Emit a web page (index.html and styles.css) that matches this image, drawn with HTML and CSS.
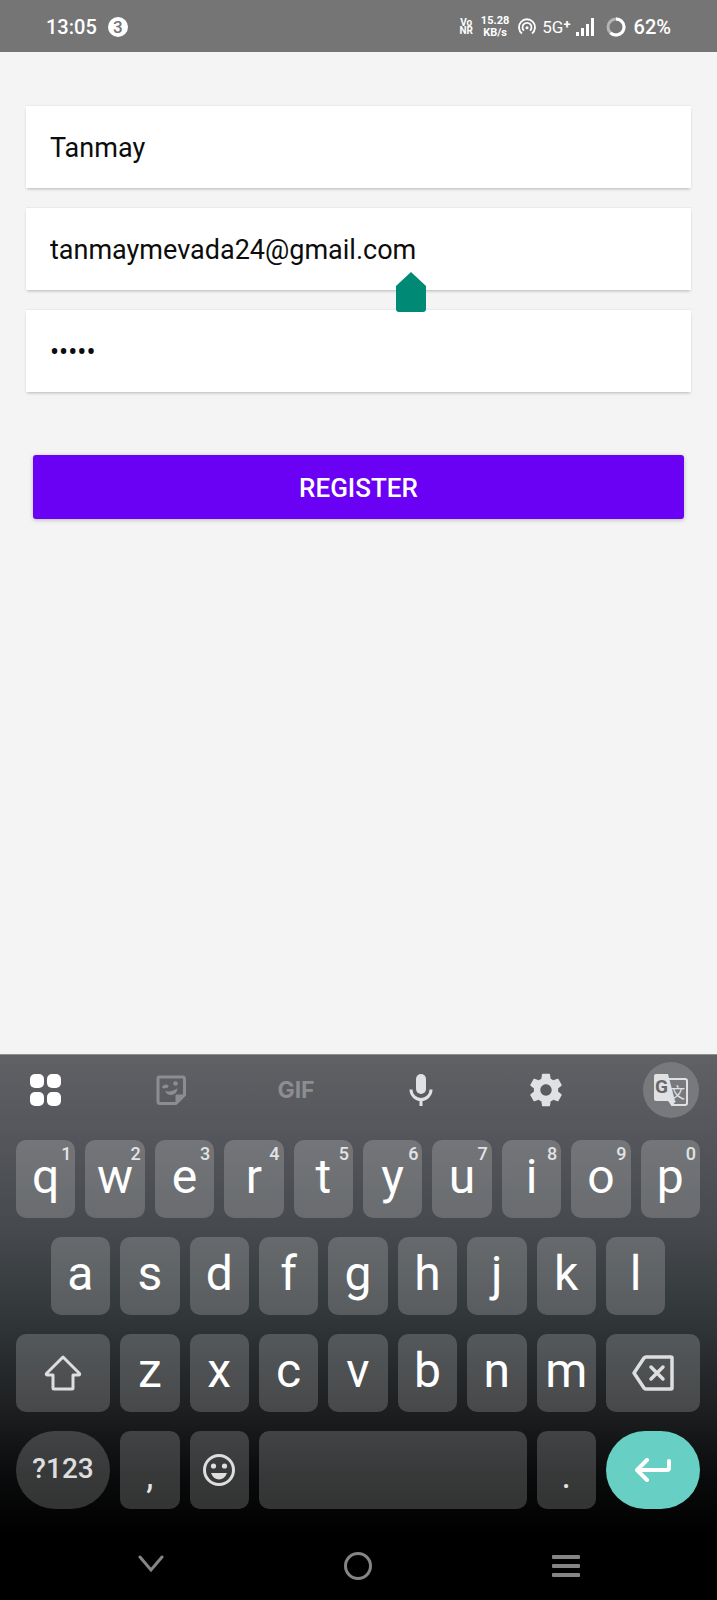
FILE: index.html
```html
<!DOCTYPE html>
<html lang="en">
<head>
<meta charset="utf-8">
<meta name="viewport" content="width=device-width, initial-scale=1">
<title>Register</title>
<link rel="stylesheet" href="styles.css">
</head>
<body>
<div class="screen">
  <header class="status">
    <span class="clock">13:05</span>
    <span class="count">3</span>
    <div class="status-right">
      <span class="stack vonr"><span>Vo</span><span>NR</span></span>
      <span class="stack speed"><span>15.28</span><span>KB/s</span></span>
      <svg class="hotspot" width="18" height="18" viewBox="0 0 18 18" fill="none" stroke="#fff" stroke-width="1.800"><path d="M4 15.500A8 8 0 1 1 14 15.500"/><path d="M6 12.700A4.500 4.500 0 1 1 12 12.700"/><circle cx="9" cy="9.800" r="1.500" fill="#fff" stroke="none"/></svg>
      <span class="network">5G<sup>+</sup></span>
      <svg class="signal" width="20" height="18" viewBox="0 0 20 18" fill="#fff"><path d="M1 14h3v4H1zM6 10h3v8H6zM11 6h3v12h-3zM16 0h3v18h-3z"/></svg>
      <svg class="ring" width="20" height="20" viewBox="0 0 20 20" fill="none" stroke-width="3"><circle cx="10" cy="10" r="8" stroke="#b4b4b4"/><path d="M10 2A8 8 0 1 1 4.500 15.800" stroke="#fff"/></svg>
      <span class="battery">62%</span>
    </div>
  </header>

  <form class="form">
    <div class="field"><input type="text" aria-label="Name" value="Tanmay"></div>
    <div class="field">
      <input type="email" aria-label="Email" value="tanmaymevada24@gmail.com">
      <svg class="handle" width="30" height="40" viewBox="0 0 30 40" fill="#008975"><path d="M15 0 30 14V37Q30 40 27 40H3Q0 40 0 37V14Z"/></svg>
    </div>
    <div class="field"><input type="password" aria-label="Password" value="12345"></div>
    <button type="button" class="register">REGISTER</button>
  </form>

  <section class="keyboard" aria-label="Keyboard">
    <div class="tools">
      <button class="tool" aria-label="Menu"><svg width="32" height="32" viewBox="0 0 32 32" fill="#fff"><rect x="0" y="0" width="14" height="14" rx="5"/><rect x="17" y="0" width="14" height="14" rx="5"/><rect x="0" y="18" width="14" height="14" rx="5"/><rect x="17" y="18" width="14" height="14" rx="5"/></svg></button>
      <button class="tool" aria-label="Stickers"><svg width="30" height="30" viewBox="0 0 30 30" fill="none" stroke="#8b8d91" stroke-width="3" stroke-linejoin="round"><path d="M3 2H27Q28.500 2 28.500 4V20L20 28.500H4Q2 28.500 2 26.500V3.500Q2 2 3 2Z"/><path d="M28 20H20V28Z" fill="#8b8d91" stroke-width="1"/><path d="M7 13Q9 10 12 12" stroke-width="3"/><circle cx="19.500" cy="8.500" r="2.300" fill="#8b8d91" stroke="none"/><path d="M9 16Q16 17.500 21.500 13Q21 20 15 20Q11 20 9 16Z" fill="#8b8d91" stroke="none"/></svg></button>
      <button class="tool gif">GIF</button>
      <button class="tool" aria-label="Voice input"><svg width="24" height="32" viewBox="0 0 24 32" fill="none" stroke="#e0e1e3" stroke-width="3"><rect x="7" y="0" width="10" height="20" rx="5" fill="#e0e1e3" stroke="none"/><path d="M2 15.500A10 10 0 0 0 22 15.500M12 25.500V32"/></svg></button>
      <button class="tool" aria-label="Settings"><svg width="34" height="34" viewBox="1.500 1.500 21 21" fill="#e0e1e3"><path d="M19.430 12.980c.04-.32.07-.64.07-.98s-.03-.66-.07-.98l2.110-1.650c.19-.15.24-.42.12-.64l-2-3.460c-.12-.22-.39-.3-.61-.22l-2.490 1c-.52-.4-1.080-.73-1.690-.98l-.38-2.650C14.460 2.180 14.250 2 14 2h-4c-.25 0-.46.18-.49.42l-.38 2.650c-.61.25-1.170.59-1.690.98l-2.490-1c-.23-.09-.49 0-.61.22l-2 3.460c-.13.22-.07.49.12.64l2.110 1.650c-.04.32-.07.65-.07.98s.03.66.07.98l-2.110 1.650c-.19.15-.24.42-.12.64l2 3.460c.12.22.39.3.61.22l2.490-1c.52.4 1.080.73 1.690.98l.38 2.650c.03.24.24.42.49.42h4c.25 0 .46-.18.49-.42l.38-2.650c.61-.25 1.170-.59 1.690-.98l2.490 1c.23.09.49 0 .61-.22l2-3.460c.12-.22.07-.49-.12-.64l-2.110-1.650zM12 15.500c-1.930 0-3.500-1.570-3.500-3.500s1.570-3.500 3.500-3.500 3.500 1.570 3.500 3.500-1.570 3.500-3.500 3.500z"/></svg></button>
      <button class="tool translate" aria-label="Translate"><svg width="36" height="36" viewBox="0 0 36 36"><path d="M16 7H32Q34 7 34 9V31Q34 33 32 33H19L17 29" fill="none" stroke="#e0e1e3" stroke-width="2"/><path d="M3 2H15L22 29H3Q1 29 1 27V4Q1 2 3 2Z" fill="#e0e1e3"/><path d="M15 29H23L19 34Z" fill="#e0e1e3"/><text class="icon-g" x="2" y="21">G</text><text class="icon-cjk" x="17" y="26">文</text></svg></button>
    </div>

    <div class="keys">
      <button class="key"><sup>1</sup>q</button><button class="key"><sup>2</sup>w</button><button class="key"><sup>3</sup>e</button><button class="key"><sup>4</sup>r</button><button class="key"><sup>5</sup>t</button><button class="key"><sup>6</sup>y</button><button class="key"><sup>7</sup>u</button><button class="key"><sup>8</sup>i</button><button class="key"><sup>9</sup>o</button><button class="key"><sup>0</sup>p</button>

      <button class="key indent">a</button><button class="key">s</button><button class="key">d</button><button class="key">f</button><button class="key">g</button><button class="key">h</button><button class="key">j</button><button class="key">k</button><button class="key">l</button>

      <button class="key wide icon first" aria-label="Shift"><svg width="38" height="36" viewBox="0 0 38 36" fill="none" stroke="#dedede" stroke-width="3" stroke-linejoin="round"><path d="M19 2 35.500 18.500Q36 20 34.500 20H29V33Q29 34 28 34H10Q9 34 9 33V20H3.500Q2 20 2.500 18.500Z"/></svg></button><button class="key">z</button><button class="key">x</button><button class="key">c</button><button class="key">v</button><button class="key">b</button><button class="key">n</button><button class="key">m</button><button class="key wide icon" aria-label="Backspace"><svg width="42" height="36" viewBox="0 0 42 36" fill="none" stroke="#dedede" stroke-width="3.500" stroke-linejoin="round" stroke-linecap="round"><path d="M14 2H39Q40 2 40 3V33Q40 34 39 34H14Q13 34 12 33L2 18 12 3Q13 2 14 2Z"/><path d="m19 12 12 12M31 12 19 24"/></svg></button>

      <button class="key wide symbols first">?123</button><button class="key mark">,</button><button class="key icon" aria-label="Emoji"><svg width="34" height="34" viewBox="0 0 34 34" fill="#dedede"><circle cx="17" cy="17" r="14.500" fill="none" stroke="#dedede" stroke-width="3"/><circle cx="11.500" cy="13" r="2.600"/><circle cx="22.500" cy="13" r="2.600"/><path d="M9 20H25Q22.500 26.500 17 26.500T9 20Z"/></svg></button><button class="key space" aria-label="Space"></button><button class="key mark">.</button><button class="key wide icon enter" aria-label="Enter"><svg width="36" height="24" viewBox="0 0 36 24" fill="none" stroke="#fff" stroke-width="4" stroke-linecap="round" stroke-linejoin="round"><path d="M34 3V10Q34 12 32 12H3M12 2 2 12 12 22"/></svg></button>
    </div>

    <nav class="nav">
      <button aria-label="Back"><svg width="26" height="24" viewBox="0 0 26 24" fill="none" stroke="#858585" stroke-width="3" stroke-linecap="round"><path d="M2 3 13 16 24 3"/></svg></button>
      <button aria-label="Home"><svg width="28" height="28" viewBox="0 0 28 28" fill="none" stroke="#858585" stroke-width="3"><circle cx="14" cy="14" r="12.500"/></svg></button>
      <button aria-label="Recent apps"><svg width="30" height="22" viewBox="0 0 30 22" fill="#858585"><rect x="1" y="0" width="28" height="4" rx="1"/><rect x="1" y="9" width="28" height="4" rx="1"/><rect x="1" y="18" width="28" height="4" rx="1"/></svg></button>
    </nav>
  </section>
</div>
</body>
</html>
```
FILE: styles.css
```css
* { box-sizing: border-box; }

body {
  margin: 0;
  background: #f4f4f4;
  font-family: Roboto, "Liberation Sans", sans-serif;
}

button {
  margin: 0;
  padding: 0;
  border: 0;
  background: none;
  font: inherit;
  color: inherit;
}

svg { display: block; flex: none; }

.screen {
  display: flex;
  flex-direction: column;
  min-height: 100vh;
}

/* Status bar */
.status {
  display: flex;
  align-items: center;
  height: 52px;
  padding: 2px 46px 0;
  background: #757575;
  color: #fff;
  font-size: 20px;
  font-weight: 500;
}

.count {
  width: 20px;
  height: 20px;
  margin-left: 11px;
  border-radius: 50%;
  background: #fff;
  color: #757575;
  font-size: 17px;
  line-height: 20px;
  text-align: center;
}

.status-right {
  display: flex;
  align-items: center;
  margin-left: auto;
}

.stack {
  display: flex;
  flex-direction: column;
  align-items: center;
  font-size: 11px;
  line-height: 12px;
  font-weight: 700;
}

.vonr {
  font-size: 10px;
  line-height: 8px;
}

.speed { margin-left: 8px; }
.hotspot { margin-left: 9px; }

.network {
  margin-left: 6px;
  font-size: 17px;
  line-height: 20px;
  font-weight: 400;
}

.network sup {
  font-size: 13px;
  line-height: 0;
  font-weight: 700;
  vertical-align: 4px;
}

.signal { margin-left: 4px; }
.ring { margin-left: 11px; }
.battery { margin-left: 8px; }

/* Form */
.form {
  display: flex;
  flex: 1;
  flex-direction: column;
  gap: 20px;
  padding: 54px 26px;
}

.field { position: relative; }

.field input {
  display: block;
  width: 100%;
  height: 82px;
  padding: 2px 24px 0;
  border: 0;
  border-radius: 0;
  outline: 0;
  background: #fff;
  box-shadow: 0 2px 3px -1px rgba(0, 0, 0, 0.25), 0 -1px 1px rgba(0, 0, 0, 0.04);
  color: #0c0c0c;
  font: 400 27px/32px Roboto, "Liberation Sans", sans-serif;
}

/* Text cursor handle, hanging below the line of text */
.handle {
  position: absolute;
  z-index: 1;
  top: 64px;
  left: 370px;
}

.register {
  height: 64px;
  margin: 43px 7px 0;
  padding-top: 2px;
  border-radius: 3px;
  background: #6a00f4;
  box-shadow: 0 1px 4px rgba(0, 0, 0, 0.25);
  color: #fff;
  font-size: 26px;
  font-weight: 500;
}

/* Keyboard */
.keyboard {
  border-top: 1px solid #8d8f92;
  background: linear-gradient(#5f6165 0, #54565b 80px, #45484c 180px, #3a3f42 225px, #2d3235 280px, #1c1d1f 360px, #0a0b0c 420px, #000 480px);
  color: #fff;
}

.tools {
  display: flex;
  align-items: center;
  justify-content: space-between;
  height: 71px;
  padding: 0 18px 2px;
}

.tool {
  display: flex;
  align-items: center;
  justify-content: center;
  width: 56px;
  height: 56px;
}

.gif {
  color: #8b8d91;
  font: 700 23px/24px Inter, sans-serif;
}

.translate {
  border-radius: 50%;
  background: #77797d;
}

.icon-g {
  fill: #66686c;
  font: 700 19px Roboto, sans-serif;
}

.icon-cjk {
  fill: #e0e1e3;
  font: 400 15px "Noto Sans CJK SC", sans-serif;
}

.keys {
  display: grid;
  grid-template-columns: repeat(20, minmax(0, 1fr));
  grid-auto-rows: 78px;
  row-gap: 19px;
  padding: 14px 12px 23px 11px;
}

.key {
  position: relative;
  grid-column: span 2;
  margin: 0 5px;
  padding-bottom: 5px;
  border-radius: 10px;
  background: rgba(255, 255, 255, 0.19);
  font-size: 48px;
  line-height: 56px;
}

.key sup {
  position: absolute;
  top: 4px;
  right: 4px;
  color: #e2e3e4;
  font-size: 18px;
  line-height: 20px;
  font-weight: 500;
}

.indent { grid-column: 2 / span 2; }
.wide { grid-column: span 3; }
.first { grid-column: 1 / span 3; }
.space { grid-column: span 8; }

.icon {
  display: flex;
  align-items: center;
  justify-content: center;
  padding: 0;
}

.symbols {
  padding: 0 0 2px;
  border-radius: 40px;
  color: #dedede;
  font-size: 28px;
  font-weight: 500;
}

.mark {
  padding: 12px 0 0;
  color: #e4e4e4;
  font-size: 36px;
}

.enter {
  border-radius: 40px;
  background: #67cfc4;
}

/* System navigation */
.nav {
  display: flex;
  justify-content: center;
  height: 68px;
}

.nav button {
  display: flex;
  flex: 0 0 29%;
  align-items: center;
  justify-content: center;
}
```
